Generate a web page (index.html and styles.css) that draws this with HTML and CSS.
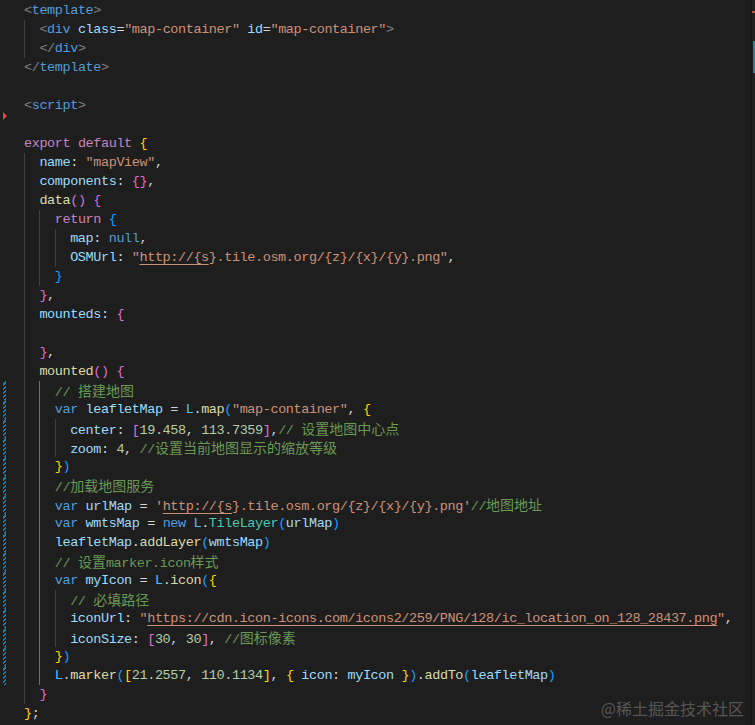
FILE: index.html
```html
<!DOCTYPE html>
<html>
<head>
    <title>mapView.vue</title>
    <link rel="stylesheet" href="styles.css">
</head>
<body>

    <div class="screen">
        <!-- Code area -->
        <div class="editor">
            <div class="ln"><span class="gut"></span><span class="code"><span class="t">&lt;</span><span class="tn">template</span><span class="t">&gt;</span></span></div>
            <div class="ln"><span class="gut"></span><span class="code"><span class="g"></span><span class="t">&lt;</span><span class="tn">div</span> <span class="v">class</span>=<span class="s">"map-container"</span> <span class="v">id</span>=<span class="s">"map-container"</span><span class="t">&gt;</span></span></div>
            <div class="ln"><span class="gut"></span><span class="code"><span class="g"></span><span class="t">&lt;/</span><span class="tn">div</span><span class="t">&gt;</span></span></div>
            <div class="ln"><span class="gut"></span><span class="code"><span class="t">&lt;/</span><span class="tn">template</span><span class="t">&gt;</span></span></div>
            <div class="ln"><span class="gut"></span><span class="code"></span></div>
            <div class="ln"><span class="gut deleted"></span><span class="code"><span class="t">&lt;</span><span class="tn">script</span><span class="t">&gt;</span></span></div>
            <div class="ln"><span class="gut"></span><span class="code"></span></div>
            <div class="ln"><span class="gut"></span><span class="code"><span class="k">export default</span> <span class="b1">{</span></span></div>
            <div class="ln"><span class="gut"></span><span class="code"><span class="g"></span><span class="v">name</span>: <span class="s">"mapView"</span>,</span></div>
            <div class="ln"><span class="gut"></span><span class="code"><span class="g"></span><span class="v">components</span>: <span class="b2">{}</span>,</span></div>
            <div class="ln"><span class="gut"></span><span class="code"><span class="g"></span><span class="f">data</span><span class="b2">()</span> <span class="b2">{</span></span></div>
            <div class="ln"><span class="gut"></span><span class="code"><span class="g"></span><span class="g"></span><span class="k">return</span> <span class="b3">{</span></span></div>
            <div class="ln"><span class="gut"></span><span class="code"><span class="g"></span><span class="g"></span><span class="g"></span><span class="v">map</span>: <span class="b">null</span>,</span></div>
            <div class="ln"><span class="gut"></span><span class="code"><span class="g"></span><span class="g"></span><span class="g"></span><span class="v">OSMUrl</span>: <span class="s">"<span class="u">http://{s</span>}.tile.osm.org/{z}/{x}/{y}.png"</span>,</span></div>
            <div class="ln"><span class="gut"></span><span class="code"><span class="g"></span><span class="g"></span><span class="b3">}</span></span></div>
            <div class="ln"><span class="gut"></span><span class="code"><span class="g"></span><span class="b2">}</span>,</span></div>
            <div class="ln"><span class="gut"></span><span class="code"><span class="g"></span><span class="v">mounteds</span>: <span class="b2">{</span></span></div>
            <div class="ln"><span class="gut"></span><span class="code"><span class="g"></span></span></div>
            <div class="ln"><span class="gut"></span><span class="code"><span class="g"></span><span class="b2">}</span>,</span></div>
            <div class="ln"><span class="gut"></span><span class="code"><span class="g"></span><span class="f">mounted</span><span class="b2">()</span> <span class="b2">{</span></span></div>
            <div class="ln"><span class="gut mod"></span><span class="code"><span class="g"></span><span class="g on"></span><span class="c">// <span class="zh">搭建地图</span></span></span></div>
            <div class="ln"><span class="gut mod"></span><span class="code"><span class="g"></span><span class="g on"></span><span class="b">var</span> <span class="v">leafletMap</span> = <span class="cn">L</span>.<span class="f">map</span><span class="b3">(</span><span class="s">"map-container"</span>, <span class="b1">{</span></span></div>
            <div class="ln"><span class="gut mod"></span><span class="code"><span class="g"></span><span class="g on"></span><span class="g"></span><span class="v">center</span>: <span class="b2">[</span><span class="n">19.458</span>, <span class="n">113.7359</span><span class="b2">]</span>,<span class="c">// <span class="zh">设置地图中心点</span></span></span></div>
            <div class="ln"><span class="gut mod"></span><span class="code"><span class="g"></span><span class="g on"></span><span class="g"></span><span class="v">zoom</span>: <span class="n">4</span>, <span class="c">//<span class="zh">设置当前地图显示的缩放等级</span></span></span></div>
            <div class="ln"><span class="gut mod"></span><span class="code"><span class="g"></span><span class="g on"></span><span class="b1">}</span><span class="b3">)</span></span></div>
            <div class="ln"><span class="gut mod"></span><span class="code"><span class="g"></span><span class="g on"></span><span class="c">//<span class="zh">加载地图服务</span></span></span></div>
            <div class="ln"><span class="gut mod"></span><span class="code"><span class="g"></span><span class="g on"></span><span class="b">var</span> <span class="v">urlMap</span> = <span class="s">'<span class="u">http://{s</span>}.tile.osm.org/{z}/{x}/{y}.png'</span><span class="c">//<span class="zh">地图地址</span></span></span></div>
            <div class="ln"><span class="gut mod"></span><span class="code"><span class="g"></span><span class="g on"></span><span class="b">var</span> <span class="v">wmtsMap</span> = <span class="b">new</span> <span class="cn">L</span>.<span class="cl">TileLayer</span><span class="b3">(</span><span class="v">urlMap</span><span class="b3">)</span></span></div>
            <div class="ln"><span class="gut mod"></span><span class="code"><span class="g"></span><span class="g on"></span><span class="v">leafletMap</span>.<span class="f">addLayer</span><span class="b3">(</span><span class="v">wmtsMap</span><span class="b3">)</span></span></div>
            <div class="ln"><span class="gut mod"></span><span class="code"><span class="g"></span><span class="g on"></span><span class="c">// <span class="zh">设置</span>marker.icon<span class="zh">样式</span></span></span></div>
            <div class="ln"><span class="gut mod"></span><span class="code"><span class="g"></span><span class="g on"></span><span class="b">var</span> <span class="v">myIcon</span> = <span class="cn">L</span>.<span class="f">icon</span><span class="b3">(</span><span class="b1">{</span></span></div>
            <div class="ln"><span class="gut mod"></span><span class="code"><span class="g"></span><span class="g on"></span><span class="g"></span><span class="c">// <span class="zh">必填路径</span></span></span></div>
            <div class="ln"><span class="gut mod"></span><span class="code"><span class="g"></span><span class="g on"></span><span class="g"></span><span class="v">iconUrl</span>: <span class="s">"<span class="u">https://cdn.icon-icons.com/icons2/259/PNG/128/ic_location_on_128_28437.png</span>"</span>,</span></div>
            <div class="ln"><span class="gut mod"></span><span class="code"><span class="g"></span><span class="g on"></span><span class="g"></span><span class="v">iconSize</span>: <span class="b2">[</span><span class="n">30</span>, <span class="n">30</span><span class="b2">]</span>, <span class="c">//<span class="zh">图标像素</span></span></span></div>
            <div class="ln"><span class="gut mod"></span><span class="code"><span class="g"></span><span class="g on"></span><span class="b1">}</span><span class="b3">)</span></span></div>
            <div class="ln"><span class="gut mod"></span><span class="code"><span class="g"></span><span class="g on"></span><span class="cn">L</span>.<span class="f">marker</span><span class="b3">(</span><span class="b1">[</span><span class="n">21.2557</span>, <span class="n">110.1134</span><span class="b1">]</span>, <span class="b1">{</span> <span class="v">icon</span>: <span class="v">myIcon</span> <span class="b1">}</span><span class="b3">)</span>.<span class="f">addTo</span><span class="b3">(</span><span class="v">leafletMap</span><span class="b3">)</span></span></div>
            <div class="ln"><span class="gut"></span><span class="code"><span class="g"></span><span class="b2">}</span></span></div>
            <div class="ln"><span class="gut"></span><span class="code"><span class="b1">}</span>;</span></div>

            <!-- Watermark -->
            <div class="watermark">@稀土掘金技术社区</div>
        </div>

        <!-- Overview ruler -->
        <div class="ruler">
            <span class="mark-red"></span>
            <span class="mark-blue"></span>
        </div>
    </div>

</body>
</html>
```

FILE: styles.css
```css
/* General Styling */
body {
    margin: 0;
    background-color: #1e1e1e;
    height: 100vh;
    overflow: hidden;
}

.screen {
    display: flex;
    height: 100vh;
}

.editor {
    flex: 1;
    position: relative;
    padding-top: 1px;
    font-family: 'Liberation Mono', 'Noto Sans CJK SC', monospace;
    font-size: 13.5px;
    letter-spacing: -0.4px;
    color: #d4d4d4;
}

.ln {
    display: flex;
    height: 19px;
    line-height: 19px;
}

/* Gutter with git decorations */
.gut {
    width: 24px;
    flex-shrink: 0;
    position: relative;
}

.gut.mod::before {
    content: "";
    position: absolute;
    left: 3px;
    top: 0;
    width: 3px;
    height: 19px;
    background: repeating-linear-gradient(-45deg, #1b81a8 0 1.5px, transparent 1.5px 3px);
}

.gut.deleted::after {
    content: "";
    position: absolute;
    left: 3px;
    bottom: -5px;
    border-top: 4px solid transparent;
    border-bottom: 4px solid transparent;
    border-left: 4px solid #e04848;
}

.code {
    white-space: pre;
}

/* Indent guides */
.g {
    display: inline-block;
    box-sizing: border-box;
    width: 15.4px;
    height: 19px;
    vertical-align: top;
    border-left: 1px solid #404040;
}

.g.on { border-left-color: #707070; }

/* Syntax colours */
.t { color: #808080; }
.tn { color: #569cd6; }
.s { color: #ce9178; }
.k { color: #c586c0; }
.b { color: #569cd6; }
.v { color: #9cdcfe; }
.f { color: #dcdcaa; }
.c { color: #6a9955; }
.n { color: #b5cea8; }
.cl { color: #4ec9b0; }
.cn { color: #4fc1ff; }
.b1 { color: #ffd700; }
.b2 { color: #da70d6; }
.b3 { color: #179fff; }

.u {
    text-decoration: underline;
    text-underline-offset: 3px;
}

.zh {
    font-family: 'Noto Sans CJK SC', sans-serif;
    font-size: 14px;
    letter-spacing: 0;
    line-height: 19px;
}

.watermark {
    position: absolute;
    right: 6px;
    bottom: 5px;
    font-family: 'Noto Sans CJK SC', sans-serif;
    font-size: 16px;
    letter-spacing: 0;
    color: rgba(255, 255, 255, 0.26);
}

/* Right scroll ruler */
.ruler {
    width: 3px;
    border-left: 2px solid #171717;
    background-color: #1e1e1e;
    position: relative;
}

.mark-red {
    position: absolute;
    top: 11px;
    left: 0;
    width: 3px;
    height: 2px;
    background-color: #b8584b;
}

.mark-blue {
    position: absolute;
    top: 41px;
    left: 1px;
    width: 2px;
    height: 32px;
    background-color: #1b81a8;
}
```
